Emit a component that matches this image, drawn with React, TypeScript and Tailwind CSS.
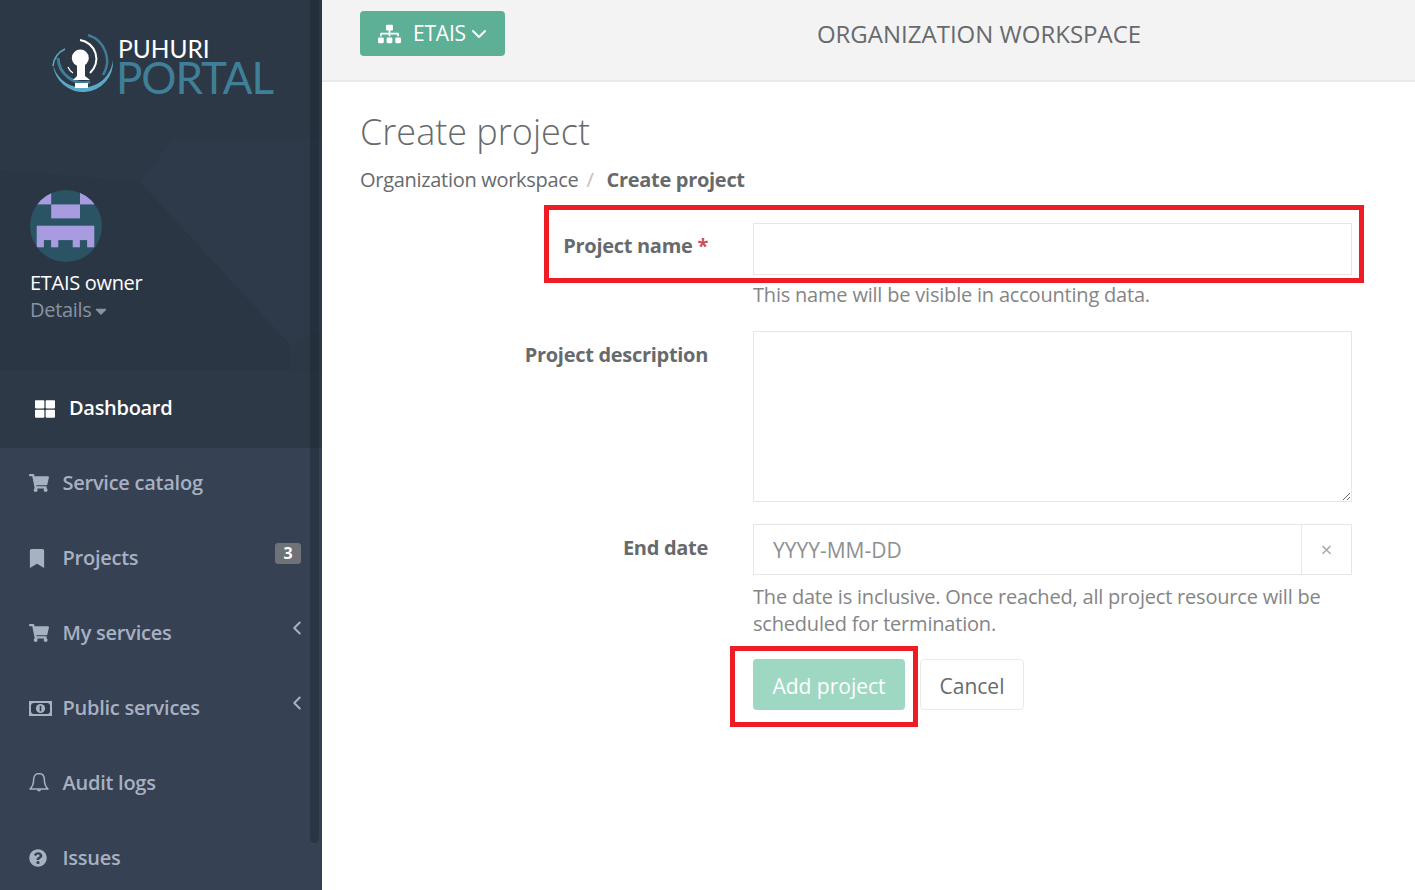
import { FaThLarge, FaShoppingCart, FaBookmark, FaQuestionCircle, FaSitemap, FaCaretDown } from 'react-icons/fa';
import { ChevronDown, ChevronLeft } from 'lucide-react';
import type { ReactNode } from 'react';

interface NavItem {
    label: string;
    icon: ReactNode;
    badge?: string;
    arrow?: boolean;
}

function MoneyIcon() {
    return (
        <svg width="23" height="15" viewBox="0 0 23 15" className="block">
            <rect width="23" height="15" fill="#a7b1c2" />
            <rect x="2" y="2" width="19" height="11" rx="3" fill="#2f3948" />
            <circle cx="11.5" cy="7.5" r="4.6" fill="#a7b1c2" />
            <rect x="10.7" y="4.8" width="1.6" height="5.4" fill="#2f3948" />
        </svg>
    );
}

function BellIcon() {
    return (
        <svg width="20" height="22" viewBox="0 0 20 22" className="block">
            <path d="M10 1.5 C6.2 1.5 4.6 4.6 4.6 8 C4.6 12 3.5 14.6 1 17 L19 17 C16.5 14.6 15.4 12 15.4 8 C15.4 4.6 13.8 1.5 10 1.5 Z" fill="none" stroke="currentColor" strokeWidth="1.5" strokeLinejoin="round" />
            <path d="M7.4 17.6 Q10 21.6 12.6 17.6 Z" fill="currentColor" />
        </svg>
    );
}

const navItems: NavItem[] = [
    { label: 'Service catalog', icon: <FaShoppingCart className="w-[20px] h-[18px]" /> },
    { label: 'Projects', icon: <FaBookmark className="w-[16px] h-[19px]" />, badge: '3' },
    { label: 'My services', icon: <FaShoppingCart className="w-[20px] h-[18px]" />, arrow: true },
    { label: 'Public services', icon: <MoneyIcon />, arrow: true },
    { label: 'Audit logs', icon: <BellIcon /> },
    { label: 'Issues', icon: <FaQuestionCircle className="w-[18px] h-[18px]" /> },
];

function Logo() {
    return (
        <svg width="224" height="72" viewBox="0 0 224 72" className="block">
            <path d="M1 30 A 30 30 0 0 0 61 26 C 56 62 8 62 1 30 Z" fill="#5aa9c6" />
            <path d="M13 15 A 21 21 0 0 0 1 32" fill="none" stroke="#5aa9c6" strokeWidth="1.6" />
            <path d="M36 1 A 27 27 0 0 1 51 41" fill="none" stroke="#3f7d96" strokeWidth="2.5" />
            <path d="M28 6 A 19 19 0 0 1 38 39" fill="none" stroke="#ffffff" strokeWidth="2" />
            <path d="M6 24 A 26 26 0 0 0 38 48" fill="none" stroke="#3f7d96" strokeWidth="3" />
            <path d="M16 33 A 12 12 0 0 0 21 39" fill="none" stroke="#ffffff" strokeWidth="1.2" />
            <circle cx="28.3" cy="24" r="8.5" fill="#ffffff" />
            <path d="M25 30 L33 30 L33 42 L38 46 L21 46 L25 42 Z" fill="#ffffff" />
            <rect x="23" y="49" width="13" height="5" fill="#ffffff" />
            <text x="66" y="24" fontFamily="Lato, sans-serif" fontSize="24.5" fill="#ffffff">PUHURI</text>
            <text x="64" y="60" fontFamily="Lato, sans-serif" fontSize="44" fill="#3f7f97" textLength="158">PORTAL</text>
        </svg>
    );
}

function Avatar() {
    return (
        <svg width="72" height="72" viewBox="0 0 72 72" className="block rounded-full">
            <rect width="72" height="72" fill="#2a5364" />
            <rect x="6.7" y="0" width="14.5" height="14.4" fill="#a99be0" />
            <rect x="50" y="0" width="14.3" height="14.4" fill="#a99be0" />
            <rect x="21.2" y="14.4" width="28.8" height="14" fill="#a99be0" />
            <rect x="6.7" y="35.7" width="57.6" height="14.4" fill="#a99be0" />
            <rect x="6.7" y="50" width="7.2" height="7.3" fill="#a99be0" />
            <rect x="21.1" y="50" width="7.2" height="7.3" fill="#a99be0" />
            <rect x="42.7" y="50" width="7.2" height="7.3" fill="#a99be0" />
            <rect x="57.1" y="50" width="7.2" height="7.3" fill="#a99be0" />
        </svg>
    );
}

function Sidebar() {
    return (
        <aside className="relative w-[322px] shrink-0 h-[890px] overflow-hidden bg-[#364153] flex flex-col">
            <div className="relative h-[448px] shrink-0 bg-[#2c3846] overflow-hidden">
                <svg width="322" height="448" viewBox="0 0 322 448" className="absolute inset-0">
                    <path d="M0 170 L140 182 L290 345 L290 448 L0 448 Z" fill="#2b3644" />
                    <path d="M140 182 L172 140 L322 140 L322 330 L290 345 Z" fill="#2e3a4a" />
                </svg>
                <div className="relative pt-[34px] pl-[52px]">
                    <Logo />
                </div>
                <div className="relative mt-[84px] pl-[30px]">
                    <Avatar />
                    <div className="mt-[7px] text-[20px] leading-[27px] text-white tracking-[-0.3px]">ETAIS owner</div>
                    <div className="flex items-center text-[20px] leading-[27px] text-[#8793a3] tracking-[-0.3px]">
                        Details
                        <FaCaretDown className="w-[18px] h-[18px] mt-[3px]" />
                    </div>
                </div>
                <div className="relative mt-[48px] flex items-center h-[78px] pl-[35px] pb-[2px] bg-[#2d3947] text-white font-semibold text-[20px]">
                    <FaThLarge className="w-[20px] h-[20px]" />
                    <span className="ml-[14px] tracking-[-0.3px] -mt-[2px]">Dashboard</span>
                </div>
            </div>
            <nav className="flex flex-col">
                {navItems.map((item) => (
                    <div key={item.label} className="relative flex items-center h-[75px] pl-[30px] pb-[5px] text-[#a7b1c2] font-semibold text-[20px]">
                        <span className="-ml-[1px] w-[33.5px] flex items-center">{item.icon}</span>
                        <span className="tracking-[-0.25px]">{item.label}</span>
                        {item.badge && (
                            <span className="absolute left-[275px] top-[20px] w-[26px] h-[21px] rounded-[3px] bg-[#6f7276] text-white text-[16px] font-bold leading-[21px] text-center">
                                {item.badge}
                            </span>
                        )}
                        {item.arrow && <ChevronLeft size={22} strokeWidth={2.2} className="absolute left-[286px] top-[19px]" />}
                    </div>
                ))}
            </nav>
            <div className="absolute left-[310px] top-0 w-[9px] h-[843px] rounded-b-[5px] bg-[#1a222c]/40" />
        </aside>
    );
}

function Help({ children }: { children: ReactNode }) {
    return <p className="text-[20px] leading-[27px] text-[#858585] tracking-[-0.2px]">{children}</p>;
}

export default function App() {
    return (
        <div className="flex h-[890px] w-[1415px] overflow-hidden bg-white text-[#676a6c]" style={{ fontFamily: '"Open Sans", sans-serif' }}>
            <Sidebar />
            <main className="relative flex-1 min-w-0">
                <header className="flex items-start h-[82px] pt-[11px] pl-[38px] bg-[#f3f3f4] border-b-2 border-[#e7eaec]">
                    <button className="flex items-center w-[145px] h-[45px] pl-[18px] rounded-[4px] bg-[#5db096] text-white text-[21px] tracking-[-0.2px]">
                        <FaSitemap className="w-[23px] h-[20px]" />
                        <span className="ml-[12px]">ETAIS</span>
                        <ChevronDown size={24} strokeWidth={2} className="ml-[1px]" />
                    </button>
                    <div className="ml-[38px] flex-1 text-center text-[24px] leading-[46px] text-[#676a6c]">
                        ORGANIZATION WORKSPACE
                    </div>
                </header>
                <div className="pl-[38px] pr-[63px]">
                    <h1 className="mt-[27px] text-[36px] leading-[46px] font-light text-[#676a6c]">Create project</h1>
                    <div className="mt-[11px] flex items-center text-[20px] leading-[27px] tracking-[-0.3px]">
                        <span>Organization workspace</span>
                        <span className="ml-[8px] text-[#c0c0c0]">/</span>
                        <span className="ml-[13px] font-bold">Create project</span>
                    </div>
                    <div className="mt-[30px] grid grid-cols-[348px_599px] gap-x-[45px] w-[992px]">
                        <label className="text-right font-bold text-[20px] leading-[27px] pt-[9px] tracking-[-0.3px]">
                            Project name <span className="text-[#c9505f]">*</span>
                        </label>
                        <div>
                            <input className="block w-full h-[52px] border border-[#e5e6e7]" />
                            <div className="mt-[6px]"><Help>This name will be visible in accounting data.</Help></div>
                        </div>
                        <label className="mt-[23px] text-right font-bold text-[20px] leading-[27px] pt-[10px] tracking-[-0.3px]">
                            Project description
                        </label>
                        <textarea className="mt-[23px] block w-full h-[171px] border border-[#e5e6e7]" />
                        <label className="mt-[22px] text-right font-bold text-[20px] leading-[27px] pt-[10px] tracking-[-0.3px]">
                            End date
                        </label>
                        <div className="mt-[22px]">
                            <div className="flex h-[51px] border border-[#e5e6e7]">
                                <input placeholder="YYYY-MM-DD" className="flex-1 min-w-0 px-[19px] pt-[3px] text-[21px] placeholder:text-[#8f8f8f] outline-none" />
                                <span className="w-[50px] flex items-center justify-center border-l border-[#e5e6e7] text-[#a5a5a5] text-[20px]">×</span>
                            </div>
                            <div className="mt-[8px]">
                                <Help>The date is inclusive. Once reached, all project resource will be scheduled for termination.</Help>
                            </div>
                            <div className="mt-[22px] flex gap-[15px]">
                                <button className="w-[152px] h-[51px] pt-[4px] rounded-[4px] bg-[#9ed8c3] text-white text-[21px]">Add project</button>
                                <button className="w-[104px] h-[51px] pt-[4px] rounded-[4px] border border-[#e7eaec] text-[21px] text-[#676a6c]">Cancel</button>
                            </div>
                        </div>
                    </div>
                </div>
                <div className="absolute left-[222px] top-[205px] w-[820px] h-[78px] border-[5px] border-[#ee1c25] pointer-events-none" />
                <div className="absolute left-[408px] top-[646px] w-[188px] h-[81px] border-[5px] border-[#ee1c25] pointer-events-none" />
            </main>
        </div>
    );
}
